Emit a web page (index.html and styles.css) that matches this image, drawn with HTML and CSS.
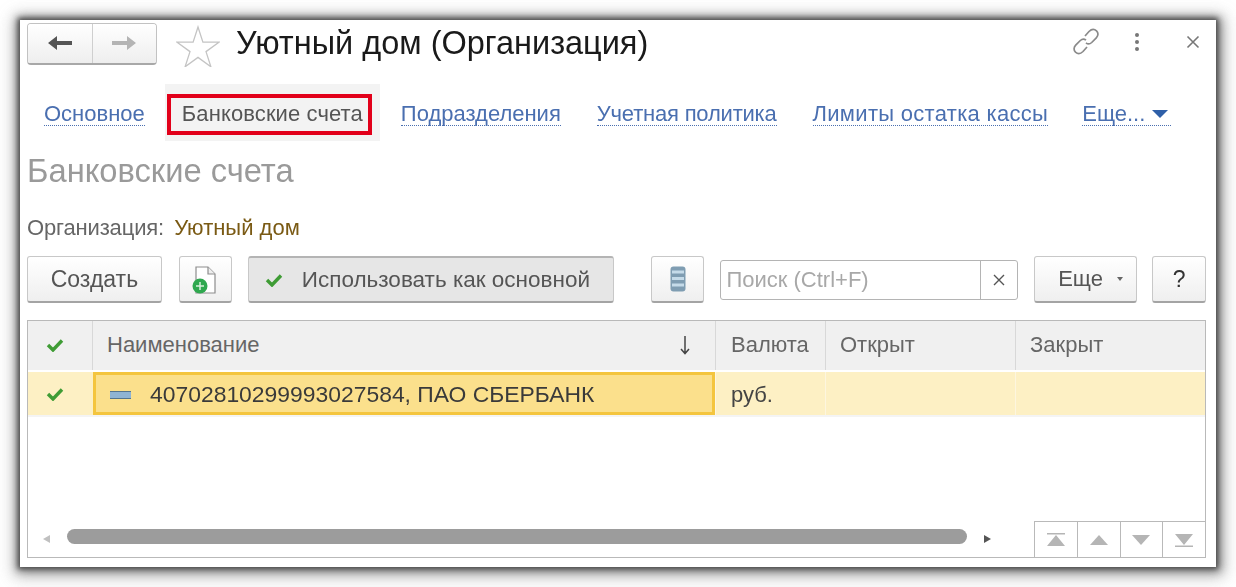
FILE: index.html
```html
<!DOCTYPE html>
<html lang="ru">
<head>
<meta charset="utf-8">
<title>Уютный дом (Организация)</title>
<link rel="stylesheet" href="styles.css">
</head>
<body>
<main class="window">
  <header class="head">
    <div class="nav">
      <button class="nav-btn">
        <svg width="26" height="20" viewBox="0 0 26 20"><path d="M1 10l9-7v5h15v4H10v5z" fill="#555"/></svg>
      </button>
      <button class="nav-btn">
        <svg width="26" height="20" viewBox="0 0 26 20"><path d="M25 10l-9-7v5H1v4h15v5z" fill="#b4b4b4"/></svg>
      </button>
    </div>
    <svg class="star" width="44" height="42" viewBox="0 0 44 42"><path d="M22 2L26.900 17.200H42.900L30 26.600 34.900 41.800 22 32.400 9.100 41.800 14 26.600 1.100 17.200H17.100Z" fill="#fff" stroke="#c4c4c4" stroke-width="1.300"/></svg>
    <h1 class="title">Уютный дом (Организация)</h1>
    <div class="head-tools">
      <svg width="30" height="30" viewBox="0 0 30 30" fill="none" stroke="#8a8a8a" stroke-width="1.700"><path d="M14 9l4-4.500c2.500-2.500 5.500-2.500 7.500-.7 2 1.900 1.900 4.800-.2 7l-4.600 4.700c-1.800 1.700-4 1.800-5.700.4"/><path d="M16 20l-4 4.500c-2.500 2.500-5.500 2.500-7.500.7-2-1.900-1.900-4.800.2-7l4.600-4.700c1.800-1.700 4-1.800 5.700-.4"/></svg>
      <span class="dots"><i></i><i></i><i></i></span>
      <svg width="14" height="14" viewBox="0 0 14 14" stroke="#777" stroke-width="1.600"><path d="M1.500 1.500l11 11M12.500 1.500l-11 11"/></svg>
    </div>
  </header>

  <nav class="tabs">
    <a class="tab">Основное</a>
    <span class="tab-active"><span class="tab-mark">Банковские счета</span></span>
    <a class="tab">Подразделения</a>
    <a class="tab tab-tight">Учетная политика</a>
    <a class="tab tab-wide">Лимиты остатка кассы</a>
    <a class="tab tab-more">Еще... <span class="more-arrow"></span></a>
  </nav>

  <h2 class="section">Банковские счета</h2>

  <p class="org"><span class="org-label">Организация:</span> <span class="org-value">Уютный дом</span></p>

  <div class="toolbar">
    <button class="btn btn-create">Создать</button>
    <button class="btn btn-icon">
      <svg width="26" height="32" viewBox="0 0 26 32"><path d="M4 4h12l7 7v19H4z" fill="#fff" stroke="#8d8d8d" stroke-width="1.200"/><path d="M16 4v7h7" fill="#eee" stroke="#8d8d8d" stroke-width="1.200"/><circle cx="8" cy="23" r="7.500" fill="#2fa84f"/><path d="M8 19v8M4 23h8" stroke="#d8f0dc" stroke-width="1.500"/></svg>
    </button>
    <button class="btn btn-pressed">
      <svg class="check" width="18" height="14" viewBox="0 0 18 14"><path d="M2 7l5 5 9-9.500" fill="none" stroke="#3f9c35" stroke-width="3.400"/></svg>
      Использовать как основной
    </button>
    <button class="btn btn-icon btn-db">
      <svg width="16" height="26" viewBox="0 0 16 26"><rect x="0.500" y="0.500" width="15" height="25" rx="3" fill="#7f9db2"/><path d="M2 6h12M2 12.500h12M2 19h12" stroke="#c5dbe9" stroke-width="3"/></svg>
    </button>
    <div class="search">
      <span class="search-input">Поиск (Ctrl+F)</span>
      <span class="search-clear">
        <svg width="12" height="12" viewBox="0 0 12 12" stroke="#555" stroke-width="1.400"><path d="M1 1l10 10M11 1L1 11"/></svg>
      </span>
    </div>
    <button class="btn btn-more">Еще <span class="small-arrow"></span></button>
    <button class="btn btn-help">?</button>
  </div>

  <section class="table">
    <div class="row row-head">
      <div class="cell c-mark"><svg width="18" height="14" viewBox="0 0 18 14"><path d="M2 7l5 5 9-9.500" fill="none" stroke="#3f9c35" stroke-width="3.400"/></svg></div>
      <div class="cell c-name">Наименование
        <svg width="14" height="20" viewBox="0 0 14 20" stroke="#444" stroke-width="1.500" fill="none"><path d="M7 1v17M3 14l4 4.500 4-4.500"/></svg>
      </div>
      <div class="cell c-cur">Валюта</div>
      <div class="cell c-open">Открыт</div>
      <div class="cell c-close">Закрыт</div>
    </div>
    <div class="row row-data">
      <div class="cell c-mark"><svg width="18" height="14" viewBox="0 0 18 14"><path d="M2 7l5 5 9-9.500" fill="none" stroke="#3f9c35" stroke-width="3.400"/></svg></div>
      <div class="cell c-name c-current"><span class="dash"></span>40702810299993027584, ПАО СБЕРБАНК</div>
      <div class="cell c-cur">руб.</div>
      <div class="cell c-open"></div>
      <div class="cell c-close"></div>
    </div>
    <div class="table-foot">
      <span class="scroll-arrow scroll-left"></span>
      <div class="scroll-track"><div class="scroll-thumb"></div></div>
      <span class="scroll-arrow scroll-right"></span>
      <div class="pager">
        <span class="page"><svg width="20" height="14" viewBox="0 0 20 14"><path d="M1 0h18v1.500H1zM10 2l9 11H1z" fill="#b5b5b5"/></svg></span>
        <span class="page"><svg width="20" height="12" viewBox="0 0 20 12"><path d="M10 1l9 10H1z" fill="#b5b5b5"/></svg></span>
        <span class="page"><svg width="20" height="12" viewBox="0 0 20 12"><path d="M10 11l9-10H1z" fill="#b5b5b5"/></svg></span>
        <span class="page"><svg width="20" height="14" viewBox="0 0 20 14"><path d="M1 12.500h18V14H1zM10 12l9-11H1z" fill="#b5b5b5"/></svg></span>
      </div>
    </div>
  </section>
</main>
</body>
</html>
```
FILE: styles.css
```css
* { box-sizing: border-box; }
html, body { height: 100%; }
body {
  margin: 0;
  padding: 20px 20px 20px 20px;
  background: #fff;
  font-family: "Liberation Sans", Arial, sans-serif;
  overflow: hidden;
}
.window {
  width: 1196px;
  height: 547px;
  background: #fff;
  padding: 2px 10px 9px 7px;
  display: flex;
  flex-direction: column;
  box-shadow: 0 0 5px 2px rgba(60,60,60,.85), 1px 1px 10px 4px rgba(80,80,80,.6), 1px 3px 16px 7px rgba(130,130,130,.4);
}
.window > * { filter: blur(.35px); }
button { font-family: inherit; }
.head { display: flex; align-items: center; height: 43px; }
.nav {
  display: flex;
  width: 130px;
  height: 42px;
  border: 1px solid #c2c2c2;
  border-bottom: 2px solid #a8a8a8;
  border-radius: 4px;
  overflow: hidden;
}
.nav-btn {
  flex: 1;
  border: 0;
  padding: 0;
  display: flex;
  align-items: center;
  justify-content: center;
  background: linear-gradient(#fff, #eeeeee);
}
.nav-btn + .nav-btn { border-left: 1px solid #cfcfcf; }
.star { margin-left: 19px; margin-top: 4px; flex: none; }
.title {
  margin: 0 0 0 16px;
  font-size: 32.500px;
  font-weight: 400;
  color: #1a1a1a;
  white-space: nowrap;
}
.head-tools {
  margin: -4px 6px 0 auto;
  display: flex;
  align-items: center;
}
.head-tools svg:first-child { margin-right: 34px; }
.dots { display: flex; flex-direction: column; gap: 3px; margin-right: 47px; }
.dots i { width: 4px; height: 4px; border-radius: 50%; background: #777; }
.tabs {
  display: flex;
  align-items: center;
  margin-top: 21px;
  height: 56px;
  font-size: 22px;
}
.tab {
  color: #4a6fb0;
  border-bottom: 1px dotted #4a6fb0;
  line-height: 22px;
  margin-left: 36px;
  white-space: nowrap;
}
.tab:first-child { margin-left: 17px; }
.tab-tight { letter-spacing: -.2px; }
.tab-wide { letter-spacing: .3px; }
.tab-active {
  margin: -3px -15px 0 20px;
  width: 215px;
  height: 57px;
  background: #f3f3f3;
  display: flex;
  align-items: center;
  padding: 3px 0 0 2px;
}
.tab-mark {
  width: 205px;
  height: 41px;
  border: 4px solid #e2001a;
  padding-left: 11px;
  display: flex;
  align-items: center;
  letter-spacing: .1px;
  color: #555;
  white-space: nowrap;
}
.tab-more { margin-left: 34px; padding-right: 3px; }
.more-arrow {
  display: inline-block;
  width: 0;
  height: 0;
  margin-left: 1px;
  vertical-align: 3px;
  border: 8px solid transparent;
  border-top: 8px solid #2f5fa8;
  border-bottom: 0;
}
.section {
  margin: 11px 0 0;
  font-size: 32.700px;
  line-height: 36px;
  font-weight: 400;
  color: #9a9a9a;
  white-space: nowrap;
}
.org { margin: 27px 0 0; font-size: 22px; line-height: 24px; white-space: nowrap; }
.org-label { color: #666; letter-spacing: -.15px; }
.org-value { color: #7a5a14; margin-left: 4px; }
.toolbar { display: flex; align-items: stretch; height: 47px; margin-top: 16px; font-size: 22px; }
.btn {
  border: 1px solid #c8c8c8;
  border-bottom: 2px solid #a4a4a4;
  border-radius: 3px;
  background: linear-gradient(#fff, #efefef);
  color: #555;
  font-size: 23px;
  padding: 0;
  display: flex;
  align-items: center;
  justify-content: center;
  white-space: nowrap;
}
.btn-create { width: 135px; }
.btn-icon { width: 53px; margin-left: 17px; }
.btn-pressed {
  width: 367px;
  margin-left: 16px;
  background: #e6e6e6;
  border-top: 2px solid #b4b4b4;
  justify-content: flex-start;
  padding-left: 16px;
  gap: 19px;
  font-size: 22.500px;
}
.btn-db { margin-left: 37px; }
.search {
  width: 298px;
  height: 40px;
  margin: 4px 0 0 16px;
  display: flex;
  border: 1px solid #b4b4b4;
  border-radius: 3px;
}
.search-input { flex: 1; color: #a8a8a8; padding-left: 5px; line-height: 38px; white-space: nowrap; }
.search-clear {
  width: 37px;
  border-left: 1px solid #b4b4b4;
  display: flex;
  align-items: center;
  justify-content: center;
}
.btn-more { width: 103px; margin-left: 16px; gap: 14px; font-size: 22px; justify-content: flex-start; padding-left: 23px; }
.small-arrow { width: 0; height: 0; border: 3.500px solid transparent; border-top: 4px solid #666; border-bottom: 0; }
.btn-help { width: 54px; margin-left: 15px; color: #333; }
.table {
  flex: 1;
  margin-top: 17px;
  border: 1px solid #b9b9b9;
  display: flex;
  flex-direction: column;
  font-size: 22px;
}
.row { display: flex; flex: none; }
.cell { display: flex; align-items: center; padding-left: 15px; white-space: nowrap; }
.c-mark { width: 64px; justify-content: center; padding: 0 10px 0 0; }
.c-name { width: 623px; padding-left: 14px; }
.c-cur { width: 110px; }
.c-open { width: 190px; padding-left: 14px; }
.c-close { flex: 1; padding-left: 14px; }
.row-head { height: 49px; background: #f0f0f0; color: #666; }
.row-head .cell { padding-bottom: 2px; }
.row-head .cell + .cell { border-left: 1px solid #d8d8d8; }
.row-head .c-name { justify-content: space-between; padding-right: 23px; }
.row-data {
  height: 45px;
  margin-top: 2px;
  background: #fdf0c4;
  color: #444;
  border-bottom: 2px solid #f4f4f4;
}
.row-data .c-cur { padding-top: 2px; }
.row-data .c-cur, .row-data .c-open, .row-data .c-close { border-left: 1px solid #fdf6df; }
.c-current {
  background: #fbe08c;
  border: 3px solid #f4c53e;
  padding: 2px 0 0 14px;
  height: 43px;
  margin-left: 1px;
  width: 622px;
  color: #3a3a3a;
  font-size: 22.900px;
}
.dash {
  width: 21px;
  height: 8px;
  margin-right: 19px;
  background: #8fb4d4;
  border: 1px solid #54758f;
  border-width: 1px 0;
}
.table-foot { margin-top: auto; display: flex; align-items: flex-end; height: 36px; }
.scroll-arrow { width: 0; height: 0; border: 4px solid transparent; flex: none; margin-bottom: 14px; }
.scroll-left { border-right: 7px solid #c0c0c0; border-left: 0; margin-left: 15px; }
.scroll-right { border-left: 7px solid #555; border-right: 0; margin-left: 17px; }
.scroll-track { width: 900px; height: 15px; margin: 0 0 13px 17px; flex: none; }
.scroll-thumb { height: 100%; border-radius: 8px; background: #9c9c9c; }
.pager { margin-left: auto; display: flex; height: 36px; }
.page {
  width: 42.750px;
  border-top: 1px solid #b9b9b9;
  border-left: 1px solid #b9b9b9;
  display: flex;
  align-items: center;
  justify-content: center;
}
```
